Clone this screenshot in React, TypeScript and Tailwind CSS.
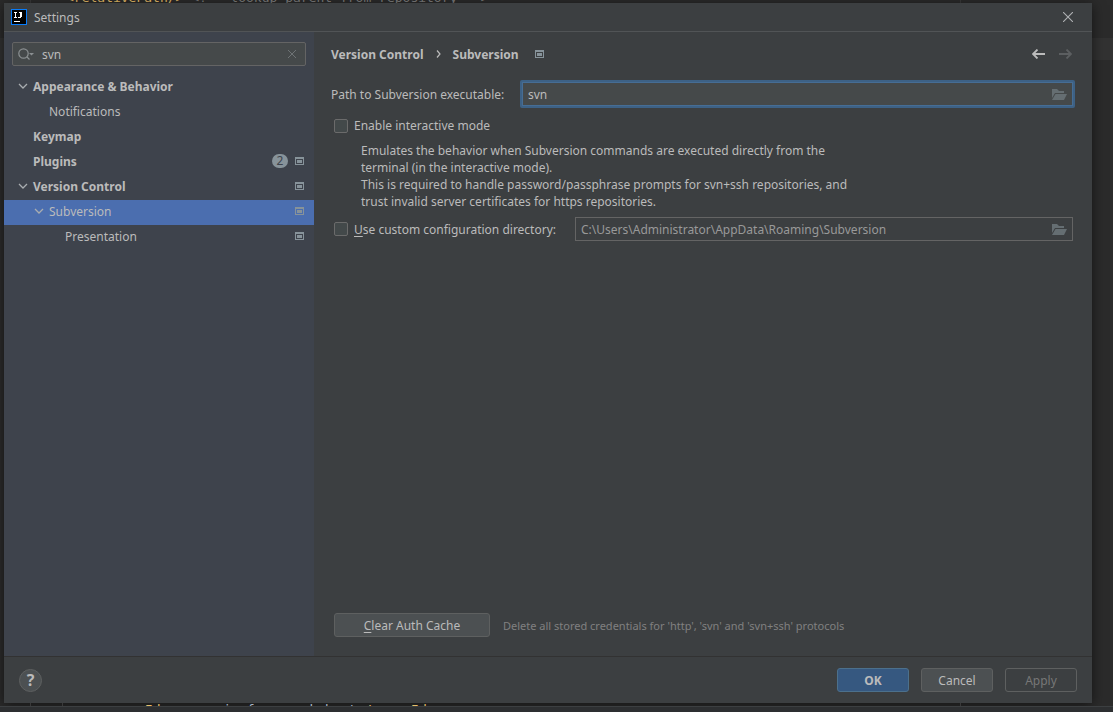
import type { ReactNode } from 'react'

function ProjectIcon({ className = '' }: { className?: string }) {
  return (
    <svg viewBox="0 0 9 8" className={`w-[9px] h-2 shrink-0 text-[#87939a] ${className}`} shapeRendering="crispEdges" aria-hidden="true">
      <path fill="currentColor" fillRule="evenodd" d="M0 0h9v8H0zM1 2v5h7V2z" />
      <path fill="currentColor" d="M2 3h5v3H2z" />
    </svg>
  )
}

function Chevron() {
  return (
    <svg viewBox="0 0 10 6" className="w-[10px] h-[6px] shrink-0" fill="none" stroke="#a9adb0" strokeWidth="1.3" aria-hidden="true">
      <path d="M1 1l4 4 4-4" />
    </svg>
  )
}

function FolderIcon() {
  return (
    <svg viewBox="0 0 16 12" className="w-4 h-3 shrink-0" fill="#656e72" aria-hidden="true">
      <path d="M1 1h5l2 2h5v2H4L1 10z" />
      <path d="M4.500 6H16l-3 6H1z" />
    </svg>
  )
}

interface RowProps {
  label: string
  indent: string
  bold?: boolean
  open?: boolean
  selected?: boolean
  badge?: number
  project?: boolean
}

const rows: RowProps[] = [
  { label: 'Appearance & Behavior', indent: 'pl-[14px]', bold: true, open: true },
  { label: 'Notifications', indent: 'pl-[30px]' },
  { label: 'Keymap', indent: 'pl-[14px]', bold: true },
  { label: 'Plugins', indent: 'pl-[14px]', bold: true, badge: 2, project: true },
  { label: 'Version Control', indent: 'pl-[14px]', bold: true, open: true, project: true },
  { label: 'Subversion', indent: 'pl-[30px]', open: true, selected: true, project: true },
  { label: 'Presentation', indent: 'pl-[46px]', project: true },
]

function TreeRow({ label, indent, bold, open, selected, badge, project }: RowProps) {
  return (
    <li>
      <button
        type="button"
        className={`flex w-full h-[25px] items-center pr-[10px] pb-[3px] text-left ${indent} ${bold ? 'font-bold' : ''} ${selected ? 'bg-[#4b6eaf]' : ''}`}
      >
        <span className="w-[15px] shrink-0">{open && <Chevron />}</span>
        <span className="flex-1">{label}</span>
        {badge && (
          <span className="mr-[7px] flex h-[14px] w-4 items-center justify-center rounded-full bg-[#87939a] font-normal leading-[14px] text-[#3e434c]">
            {badge}
          </span>
        )}
        {project && <ProjectIcon />}
      </button>
    </li>
  )
}

function Button({ children, className }: { children: ReactNode; className: string }) {
  return (
    <button type="button" className={`h-6 rounded-[3px] border text-center ${className}`}>
      {children}
    </button>
  )
}

const checkbox = 'size-[14px] shrink-0 appearance-none rounded-[2px] border border-[#6b6b6b] bg-[#43494a]'

export default function App() {
  return (
    <div className="flex min-h-screen flex-col bg-[#2b2b2b] bg-[linear-gradient(#323232,#323232)] bg-[length:100%_22px] bg-[position:0_38px] bg-no-repeat font-['Noto_Sans','Open_Sans',sans-serif] text-xs leading-[17px] text-[#bbbbbb]">
      <div className="flex h-[3px] items-end overflow-hidden whitespace-pre font-['DejaVu_Sans_Mono',monospace] text-[13px] text-[#808080]" aria-hidden="true">
        <div className="h-[3px] w-[31px] border-r border-[#3a3a3a]" />
        <div className="ml-[35px] flex-1 leading-[11px]">
          <span className="text-[#e8bf6a]">{'<relativePath/>'}</span>
          {' <!-- lookup parent from repository -->'}
        </div>
        <div className="h-[3px] w-[153px] border-l border-[#3a3a3a]" />
      </div>

      <main className="ml-1 mr-[21px] flex flex-1 flex-col bg-[#3c3f41] shadow-[0_2px_12px_rgba(0,0,0,0.55)]">
        <header className="flex h-[29px] items-center border-b border-[#515456] pl-[7px] pr-[19px]">
          <svg viewBox="0 0 16 16" className="mr-[7px] size-4" shapeRendering="crispEdges" aria-hidden="true">
            <path fill="#087cfa" d="M0 0h16v16H0z" />
            <path fill="#000" d="M1 1h14v14H1z" />
            <path fill="#fff" d="M3 3h3v1H5v4h1v1H3V8h1V4H3zM8 3h3v5h-1v1H7V8h2V4H8zM3 12h6v1H3z" />
          </svg>
          <h1 className="flex-1">Settings</h1>
          <button type="button" aria-label="Close">
            <svg viewBox="0 0 10 10" className="size-[10px]" stroke="#afb1b3" strokeWidth="1.1" aria-hidden="true">
              <path d="M0 0l10 10M10 0L0 10" />
            </svg>
          </button>
        </header>

        <div className="flex flex-1">
          <aside className="w-[310px] shrink-0 bg-[#3e434c] pt-[10px]">
            <div className="mx-2 mb-[9px] flex h-6 items-center rounded-[2px] border border-[#646464] bg-[#45494a] pl-[5px] pr-[9px]">
              <svg viewBox="0 0 16 12" className="mr-2 h-3 w-4 shrink-0" fill="none" stroke="#8b9092" strokeWidth="1.2" aria-hidden="true">
                <circle cx="5.5" cy="5.5" r="4.7" />
                <path d="M9 9l2.500 2.500" />
                <path d="M11 5h5l-2.500 2.500z" fill="#8b9092" stroke="none" />
              </svg>
              <input type="text" aria-label="Search settings" defaultValue="svn" className="min-w-0 flex-1 bg-transparent outline-none" />
              <button type="button" aria-label="Clear search">
                <svg viewBox="0 0 8 8" className="size-2" stroke="#6e7375" aria-hidden="true">
                  <path d="M0 0l8 8M8 0L0 8" />
                </svg>
              </button>
            </div>
            <ul>
              {rows.map((row) => (
                <TreeRow key={row.label} {...row} />
              ))}
            </ul>
          </aside>

          <section className="flex min-w-0 flex-1 flex-col pb-[19px] pl-[17px] pr-[17px]">
            <div className="mb-1 flex h-11 items-center font-bold">
              <span>Version Control</span>
              <svg viewBox="0 0 5 8" className="mx-3 h-2 w-[5px]" fill="none" stroke="#bbbbbb" strokeWidth="1.2" aria-hidden="true">
                <path d="M1 0.500l3 3.500-3 3.500" />
              </svg>
              <span>Subversion</span>
              <ProjectIcon className="ml-4" />
              <div className="ml-auto flex gap-[14px] pr-[3px]">
                <button type="button" aria-label="Back">
                  <svg viewBox="0 0 13 10" className="h-[10px] w-[13px]" fill="none" stroke="#bbbbbb" strokeWidth="1.8" aria-hidden="true">
                    <path d="M13 5H1M5.500 0.500L1 5l4.500 4.500" />
                  </svg>
                </button>
                <button type="button" aria-label="Forward" disabled>
                  <svg viewBox="0 0 13 10" className="h-[10px] w-[13px]" fill="none" stroke="#5c5f61" strokeWidth="1.8" aria-hidden="true">
                    <path d="M0 5h12M7.500 0.500L12 5 7.500 9.500" />
                  </svg>
                </button>
              </div>
            </div>

            <div className="flex items-center">
              <label htmlFor="svn-path" className="w-[189px] shrink-0 whitespace-nowrap">Path to Subversion executable:</label>
              <div className="flex h-7 flex-1 items-center rounded-[2px] border-2 border-[#3d6185] bg-[#45494a] px-[6px] ring-1 ring-inset ring-[#466d94]">
                <input id="svn-path" type="text" defaultValue="svn" className="min-w-0 flex-1 bg-transparent outline-none" />
                <button type="button" aria-label="Browse executable"><FolderIcon /></button>
              </div>
            </div>

            <div className="mt-[9px] flex items-center gap-[6px] pl-[3px]">
              <input id="interactive" type="checkbox" className={checkbox} />
              <label htmlFor="interactive">Enable interactive mode</label>
            </div>
            <p className="mt-2 pl-[30px]">
              Emulates the behavior when Subversion commands are executed directly from the
              <br />
              terminal (in the interactive mode).
              <br />
              This is required to handle password/passphrase prompts for svn+ssh repositories, and
              <br />
              trust invalid server certificates for https repositories.
            </p>

            <div className="mt-[7px] flex items-center pl-[3px] pr-[2px]">
              <input id="custom-dir" type="checkbox" className={checkbox} />
              <label htmlFor="custom-dir" className="ml-[6px] w-[221px] shrink-0 whitespace-nowrap">
                <span className="underline underline-offset-2">U</span>se custom configuration directory:
              </label>
              <div className="flex h-6 flex-1 items-center border border-[#646464] px-[5px]">
                <input
                  type="text"
                  aria-label="Configuration directory"
                  defaultValue="C:\Users\Administrator\AppData\Roaming\Subversion"
                  readOnly
                  className="min-w-0 flex-1 bg-transparent text-[#999999] outline-none"
                />
                <button type="button" aria-label="Browse directory"><FolderIcon /></button>
              </div>
            </div>

            <div className="mt-auto flex items-center gap-[13px] pl-[3px]">
              <Button className="w-[156px] border-[#5e6060] bg-[#4c5052]">
                <span className="underline underline-offset-2">C</span>lear Auth Cache
              </Button>
              <span className="text-[11px] text-[#808080]">Delete all stored credentials for 'http', 'svn' and 'svn+ssh' protocols</span>
            </div>
          </section>
        </div>

        <footer className="flex h-[47px] items-center gap-3 border-t border-[#323232] pl-[15px] pr-[15px]">
          <button type="button" aria-label="Help" className="mr-auto size-[23px] rounded-full border border-[#5e6060] bg-[#4c5052] text-base font-bold leading-[21px]">
            ?
          </button>
          <Button className="w-[72px] border-[#4c708c] bg-[#365880] font-bold">OK</Button>
          <Button className="w-[72px] border-[#5e6060] bg-[#4c5052]">Cancel</Button>
          <Button className="w-[72px] border-[#5e6060] text-[#777777]">Apply</Button>
        </footer>
      </main>

      <div className="flex h-[3px] overflow-hidden whitespace-pre font-['DejaVu_Sans_Mono',monospace] text-[13px] text-[#a9b7c6]" aria-hidden="true">
        <div className="h-[3px] w-[31px] border-r border-[#3a3a3a]" />
        <div className="h-[3px] w-8 border-r border-[#3a3a3a]" />
        <div className="ml-[35px] flex-1 leading-[13px]">
          <span className="text-[#e8bf6a]">{'<groupId>'}</span>
          org.springframework.boot
          <span className="text-[#e8bf6a]">{'</groupId>'}</span>
        </div>
        <div className="h-[3px] w-[153px] border-l border-[#3a3a3a]" />
      </div>
      <div className="h-[6px] border-t border-[#3c3f41] bg-[#2d2f31]" />
    </div>
  )
}
